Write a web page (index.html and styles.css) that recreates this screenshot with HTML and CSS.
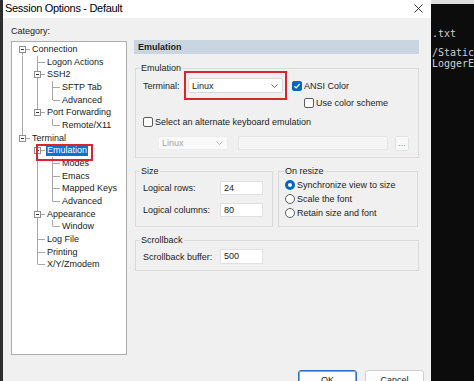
FILE: index.html
```html
<!DOCTYPE html>
<html>
<head>
<meta charset="utf-8">
<title>Session Options - Default</title>
<link rel="stylesheet" href="styles.css">
</head>
<body>
<div class="screen">
  <div class="edge"></div>
  <div class="dialog">
    <div class="titlebar">
      <span class="title">Session Options - Default</span>
      <svg class="close" width="9" height="9" viewBox="0 0 9 9"><path d="M0.5 0.5 L8.5 8.5 M8.5 0.5 L0.5 8.5" stroke="#222" stroke-width="0.9" fill="none"/></svg>
    </div>
    <div class="body">
      <div class="main">
        <div class="leftcol">
          <div class="cat-label">Category:</div>
          <div class="tree">
            <div class="trow"><span class="c xf"><i class="box"></i></span><span class="tx">Connection</span></div>
            <div class="trow"><span class="c v"></span><span class="c t"></span><span class="tx">Logon Actions</span></div>
            <div class="trow"><span class="c v"></span><span class="c xm"><i class="box"></i></span><span class="tx">SSH2</span></div>
            <div class="trow"><span class="c v"></span><span class="c v"></span><span class="c t"></span><span class="tx">SFTP Tab</span></div>
            <div class="trow"><span class="c v"></span><span class="c v"></span><span class="c e"></span><span class="tx">Advanced</span></div>
            <div class="trow"><span class="c v"></span><span class="c xl"><i class="box"></i></span><span class="tx">Port Forwarding</span></div>
            <div class="trow"><span class="c v"></span><span class="c"></span><span class="c e"></span><span class="tx">Remote/X11</span></div>
            <div class="trow"><span class="c xl"><i class="box"></i></span><span class="tx">Terminal</span></div>
            <div class="trow"><span class="c"></span><span class="c xm"><i class="box"></i></span><span class="tx sel">Emulation</span></div>
            <div class="trow"><span class="c"></span><span class="c v"></span><span class="c t"></span><span class="tx">Modes</span></div>
            <div class="trow"><span class="c"></span><span class="c v"></span><span class="c t"></span><span class="tx">Emacs</span></div>
            <div class="trow"><span class="c"></span><span class="c v"></span><span class="c t"></span><span class="tx">Mapped Keys</span></div>
            <div class="trow"><span class="c"></span><span class="c v"></span><span class="c e"></span><span class="tx">Advanced</span></div>
            <div class="trow"><span class="c"></span><span class="c xm"><i class="box"></i></span><span class="tx">Appearance</span></div>
            <div class="trow"><span class="c"></span><span class="c v"></span><span class="c e"></span><span class="tx">Window</span></div>
            <div class="trow"><span class="c"></span><span class="c t"></span><span class="tx">Log File</span></div>
            <div class="trow"><span class="c"></span><span class="c t"></span><span class="tx">Printing</span></div>
            <div class="trow"><span class="c"></span><span class="c e"></span><span class="tx">X/Y/Zmodem</span></div>
            <div class="annot"></div>
          </div>
        </div>
        <div class="rightcol">
          <div class="header">Emulation</div>
          <div class="group g-emu">
            <div class="gtitle">Emulation</div>
            <div class="r-term">
              <span class="lbl-term">Terminal:</span>
              <div class="redbox">
                <div class="select"><span>Linux</span><svg width="7" height="4" viewBox="0 0 7 4"><path d="M0.5 0.5 L3.5 3.5 L6.5 0.5" stroke="#555" stroke-width="0.9" fill="none"/></svg></div>
              </div>
              <div class="check"><span class="cb on"><svg width="8" height="8" viewBox="0 0 8 8"><path d="M1.3 4.2 L3.2 6 L6.7 2" stroke="#fff" stroke-width="1.2" fill="none"/></svg></span>ANSI Color</div>
            </div>
            <div class="r-scheme"><span class="cb"></span>Use color scheme</div>
            <div class="r-alt"><span class="cb"></span>Select an alternate keyboard emulation</div>
            <div class="r-dis">
              <div class="select dis"><span>Linux</span><svg width="7" height="4" viewBox="0 0 7 4"><path d="M0.5 0.5 L3.5 3.5 L6.5 0.5" stroke="#b5b5b5" stroke-width="0.9" fill="none"/></svg></div>
              <div class="field"></div>
              <div class="dots">...</div>
            </div>
          </div>
          <div class="pair">
            <div class="group g-size">
              <div class="gtitle">Size</div>
              <div class="frow first"><span class="flbl">Logical rows:</span><span class="inp">24</span></div>
              <div class="frow second"><span class="flbl">Logical columns:</span><span class="inp">80</span></div>
            </div>
            <div class="group g-resize">
              <div class="gtitle">On resize</div>
              <div class="rrow first"><span class="radio on"></span>Synchronize view to size</div>
              <div class="rrow"><span class="radio"></span>Scale the font</div>
              <div class="rrow"><span class="radio"></span>Retain size and font</div>
            </div>
          </div>
          <div class="group g-scroll">
            <div class="gtitle">Scrollback</div>
            <div class="frow sb"><span class="flbl">Scrollback buffer:</span><span class="inp tall">500</span></div>
          </div>
        </div>
      </div>
      <div class="buttons">
        <button class="btn ok">OK</button>
        <button class="btn">Cancel</button>
      </div>
    </div>
  </div>
  <div class="term">
    <div class="tl l1">.txt</div>
    <div class="tl l2">/Static</div>
    <div class="tl l3">LoggerE</div>
  </div>
</div>
</body>
</html>
```

FILE: styles.css
```css
* { box-sizing: border-box; }
html, body { margin: 0; padding: 0; }
body {
  width: 474px;
  height: 381px;
  overflow: hidden;
  background: #000;
  font-family: "Liberation Sans", Arial, sans-serif;
  font-size: 9px;
  color: #1b1b1b;
}
.screen { display: flex; height: 381px; }
.edge { width: 3px; flex: none; background: #2e2e2e; }
.dialog {
  width: 428px;
  flex: none;
  display: flex;
  flex-direction: column;
  background: #f0f0f0;
}
.titlebar {
  height: 18px;
  flex: none;
  background: #fff;
  display: flex;
  align-items: center;
  justify-content: space-between;
  padding: 0 8px 2px 2px;
}
.title { font-size: 11px; letter-spacing: -0.3px; color: #000; }
.close { display: block; }
.body { flex: 1; padding: 7px 7px 0 8px; display: flex; flex-direction: column; }
.main {
  display: grid;
  grid-template-columns: 116px 285px;
  column-gap: 7px;
  align-items: start;
}
.cat-label { height: 12px; line-height: 12px; margin-bottom: 4px; }
.tree {
  position: relative;
  height: 314px;
  background: #fff;
  border: 1px solid #acacac;
  padding: 1px 0 0 3px;
}
.trow { display: flex; height: 12.68px; align-items: stretch; }
.c {
  width: 15px;
  flex: none;
  display: flex;
  align-items: center;
  justify-content: center;
  background-repeat: no-repeat;
}
.c.v { background-image: linear-gradient(#a8a8a8, #a8a8a8); background-position: 7px 0; background-size: 1px 100%; }
.c.t, .c.xm {
  background-image: linear-gradient(#a8a8a8, #a8a8a8), linear-gradient(#a8a8a8, #a8a8a8);
  background-position: 7px 0, 8px 50%;
  background-size: 1px 100%, 7px 1px;
}
.c.e, .c.xl {
  background-image: linear-gradient(#a8a8a8, #a8a8a8), linear-gradient(#a8a8a8, #a8a8a8);
  background-position: 7px 0, 8px 50%;
  background-size: 1px 50%, 7px 1px;
}
.c.xf {
  background-image: linear-gradient(#a8a8a8, #a8a8a8), linear-gradient(#a8a8a8, #a8a8a8);
  background-position: 7px 100%, 8px 50%;
  background-size: 1px 50%, 7px 1px;
}
.box {
  display: block;
  width: 7px;
  height: 7px;
  border: 1px solid #909090;
  background: #fff linear-gradient(#333, #333) center / 3px 1px no-repeat;
}
.tx { margin-left: 2px; line-height: 12.68px; white-space: nowrap; }
.tx.sel {
  margin-left: 1px;
  padding: 0 1px;
  align-self: center;
  line-height: 11px;
  background: #0a6fd6;
  color: #fff;
}
.annot {
  position: absolute;
  left: 24px;
  top: 102px;
  width: 57px;
  height: 17px;
  border: 2px solid #d9262e;
}
.rightcol { padding-top: 15px; }
.header {
  height: 14px;
  line-height: 14px;
  background: #c9d6e2;
  font-weight: bold;
  padding-left: 4px;
}
.group {
  display: flex;
  flex-direction: column;
  border: 1px solid #dadada;
  padding-left: 7px;
}
.gtitle {
  align-self: flex-start;
  height: 12px;
  line-height: 12px;
  margin: -7px 0 -5px -3px;
  padding: 0 1px;
  background: #f0f0f0;
}
.g-emu { height: 90px; margin: 14px 0 0 1px; }
.r-term { display: flex; align-items: center; height: 29px; margin-top: 2px; }
.lbl-term { width: 41px; flex: none; }
.redbox { border: 2px solid #d9262e; padding: 5px 2px; flex: none; }
.select {
  width: 95px;
  height: 15px;
  background: #fff;
  border: 1px solid #d8d8d8;
  border-radius: 2px;
  display: flex;
  align-items: center;
  justify-content: space-between;
  padding: 0 4px 0 3px;
}
.select svg { display: block; }
.check { display: flex; align-items: center; margin-left: 5px; }
.cb {
  width: 10px;
  height: 10px;
  flex: none;
  border: 1px solid #5c5c5c;
  border-radius: 2px;
  background: #fff;
  margin-right: 2px;
  display: flex;
  align-items: center;
  justify-content: center;
}
.cb.on { background: #0067c0; border-color: #0067c0; }
.cb svg { display: block; }
.r-scheme { display: flex; align-items: center; height: 12px; margin: -3px 0 0 161px; }
.r-alt { display: flex; align-items: center; height: 12px; margin-top: 7px; }
.r-dis { display: flex; height: 14px; margin: 8px 0 0 15px; }
.select.dis {
  width: 70px;
  height: 14px;
  color: #a3a3a3;
  border-color: #ececec;
  background: #fafafa;
}
.field {
  width: 150px;
  height: 14px;
  margin-left: 10px;
  background: #f5f5f5;
  border: 1px solid #e6e6e6;
  border-radius: 2px;
}
.dots {
  width: 14px;
  height: 15px;
  margin-left: 7px;
  background: #f8f8f8;
  border: 1px solid #e2e2e2;
  border-radius: 2px;
  color: #8a8a8a;
  text-align: center;
  line-height: 12px;
}
.pair { display: flex; gap: 5px; margin: 13px 0 0 1px; }
.g-size { width: 138px; height: 56px; }
.frow { display: flex; align-items: center; height: 14px; }
.frow.first { margin-top: 9px; }
.frow.second { margin-top: 8px; }
.flbl { width: 77px; flex: none; }
.inp {
  width: 43px;
  height: 14px;
  background: #fff;
  border: 1px solid #e0e0e0;
  padding-left: 3px;
  line-height: 12px;
}
.inp.tall { height: 15px; line-height: 13px; }
.g-resize { width: 140px; height: 56px; padding-left: 6px; }
.g-resize .gtitle { margin-left: -1px; }
.rrow { display: flex; align-items: center; height: 14px; }
.rrow.first { margin-top: 6px; }
.radio {
  width: 10px;
  height: 10px;
  flex: none;
  border-radius: 50%;
  border: 1px solid #5c5c5c;
  background: #fff;
  margin-right: 2px;
}
.radio.on { border: 3px solid #0067c0; }
.g-scroll { height: 31px; margin: 13px 0 0 1px; }
.frow.sb { height: 15px; margin-top: 8px; }
.buttons { display: flex; justify-content: flex-end; gap: 8px; margin-top: 15px; }
.btn {
  width: 59px;
  height: 21px;
  padding: 0;
  font: inherit;
  color: #1b1b1b;
  background: #fdfdfd;
  border: 1px solid #d0d0d0;
  border-radius: 3px;
  line-height: 19px;
}
.btn.ok { border-color: #2a72c4; box-shadow: inset 0 0 0 1px #7aa6da; }
.term {
  flex: 1;
  min-width: 0;
  overflow: hidden;
  background: #0c0c0c;
  border-top: 4px solid #dedede;
  padding: 23.5px 0 0 1px;
  font-family: "DejaVu Sans Mono", "Liberation Mono", monospace;
  font-size: 10px;
  line-height: 11px;
  color: #cfcfcf;
  white-space: nowrap;
}
.tl.l2 { margin-top: 8px; }
```
